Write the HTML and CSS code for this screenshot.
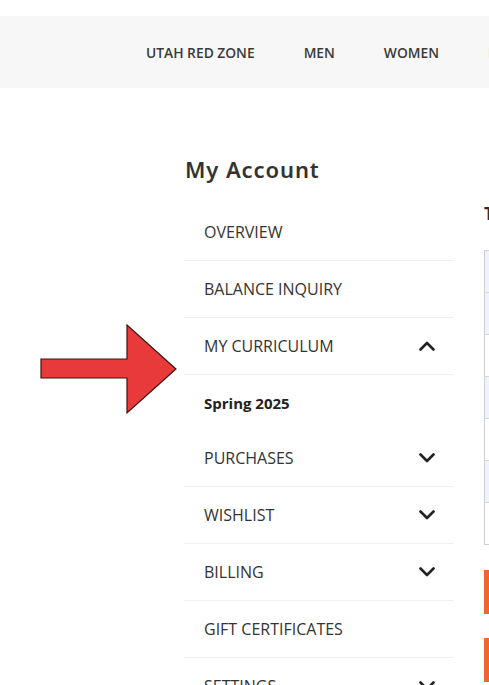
FILE: index.html
```html
<!DOCTYPE html>
<html>
<head>
<meta charset="utf-8">
<link rel="stylesheet" href="styles.css">
</head>
<body>
<header class="topbar">
  <nav class="nav">
    <a class="nav-item">UTAH RED ZONE</a>
    <a class="nav-item">MEN</a>
    <a class="nav-item">WOMEN</a>
    <a class="nav-item">KIDS</a>
  </nav>
</header>
<main class="page">
  <aside class="sidebar">
    <h1 class="title">My Account</h1>
    <ul class="menu">
      <li class="row"><span>OVERVIEW</span></li>
      <li class="row"><span>BALANCE INQUIRY</span></li>
      <li class="row"><span>MY CURRICULUM</span>
        <svg class="chev" viewBox="0 0 16 10"><path d="M1.5 8.5 L8 2 L14.5 8.5" /></svg>
      </li>
      <li class="row sub"><span>Spring 2025</span></li>
      <li class="row"><span>PURCHASES</span>
        <svg class="chev" viewBox="0 0 16 10"><path d="M1.5 1.5 L8 8 L14.5 1.5" /></svg>
      </li>
      <li class="row"><span>WISHLIST</span>
        <svg class="chev" viewBox="0 0 16 10"><path d="M1.5 1.5 L8 8 L14.5 1.5" /></svg>
      </li>
      <li class="row"><span>BILLING</span>
        <svg class="chev" viewBox="0 0 16 10"><path d="M1.5 1.5 L8 8 L14.5 1.5" /></svg>
      </li>
      <li class="row"><span>GIFT CERTIFICATES</span></li>
      <li class="row"><span>SETTINGS</span>
        <svg class="chev" viewBox="0 0 16 10"><path d="M1.5 1.5 L8 8 L14.5 1.5" /></svg>
      </li>
    </ul>
  </aside>
  <section class="content">
    <h2 class="content-title">Textbooks</h2>
    <table class="table">
      <tr class="alt"><td>&nbsp;</td></tr>
      <tr class="alt"><td>&nbsp;</td></tr>
      <tr><td>&nbsp;</td></tr>
      <tr class="alt"><td>&nbsp;</td></tr>
      <tr><td>&nbsp;</td></tr>
      <tr class="alt"><td>&nbsp;</td></tr>
      <tr><td>&nbsp;</td></tr>
    </table>
    <div class="btn"></div>
    <div class="btn"></div>
  </section>
</main>
<svg class="arrow" width="140" height="92" viewBox="0 0 140 92">
  <path d="M1 35 L87 35 L87 1 L136 45 L87 89 L87 54 L1 54 Z" />
</svg>
</body>
</html>
```
FILE: styles.css
```css
html, body {
  margin: 0;
  padding: 0;
  overflow: hidden;
  background: #fff;
  font-family: "Open Sans", "Liberation Sans", sans-serif;
  color: #333;
}
body {
  position: relative;
  width: 489px;
  height: 685px;
}
.topbar {
  margin-top: 16px;
  height: 72px;
  background: #f7f7f7;
  display: flex;
  align-items: center;
}
.nav {
  display: flex;
  gap: 49px;
  padding-left: 146px;
  white-space: nowrap;
}
.nav-item {
  font-size: 13.8px;
  font-weight: 600;
  color: #3a3a3a;
}
.page {
  display: flex;
  gap: 30px;
  padding-left: 184px;
  padding-top: 66px;
  white-space: nowrap;
}
.sidebar {
  width: 270px;
  flex: none;
}
.title {
  margin: 0 0 20px 1px;
  font-family: "Noto Sans", "Open Sans", sans-serif;
  font-weight: 600;
  font-size: 22px;
  line-height: 30px;
  color: #333;
  letter-spacing: 0.9px;
}
.menu {
  list-style: none;
  margin: 0;
  padding: 0;
}
.row {
  height: 56px;
  border-bottom: 1px solid #efefef;
  display: flex;
  align-items: center;
  justify-content: space-between;
  padding: 0 19px 0 20px;
  font-size: 16px;
  color: #333;
}
.row.sub {
  height: 55px;
  border-bottom: none;
  font-weight: 700;
  font-size: 15px;
  color: #222;
}
.chev {
  width: 16px;
  height: 10px;
  fill: none;
  stroke: #222;
  stroke-width: 2.6;
  stroke-linecap: round;
  stroke-linejoin: round;
}
.content {
  flex: none;
  width: 300px;
  padding-top: 49px;
}
.content-title {
  margin: 0 0 25px 0;
  font-size: 17px;
  font-weight: 700;
  color: #3b2a20;
  line-height: 22px;
}
.table {
  border-collapse: collapse;
  width: 100%;
  border: 1px solid #cfcfcf;
}
.table td {
  height: 41px;
  padding: 0;
  border-top: 1px solid #d6d6d6;
}
.table tr.alt td {
  background: #eef4f9;
}
.btn {
  margin-top: 25px;
  height: 44px;
  width: 100%;
  background: #f26430;
}
.btn + .btn {
  margin-top: 24px;
}
.arrow {
  position: absolute;
  left: 40px;
  top: 324px;
}
.arrow path {
  fill: #e8393b;
  stroke: #3a1414;
  stroke-width: 1.2;
  stroke-linejoin: miter;
}
```
